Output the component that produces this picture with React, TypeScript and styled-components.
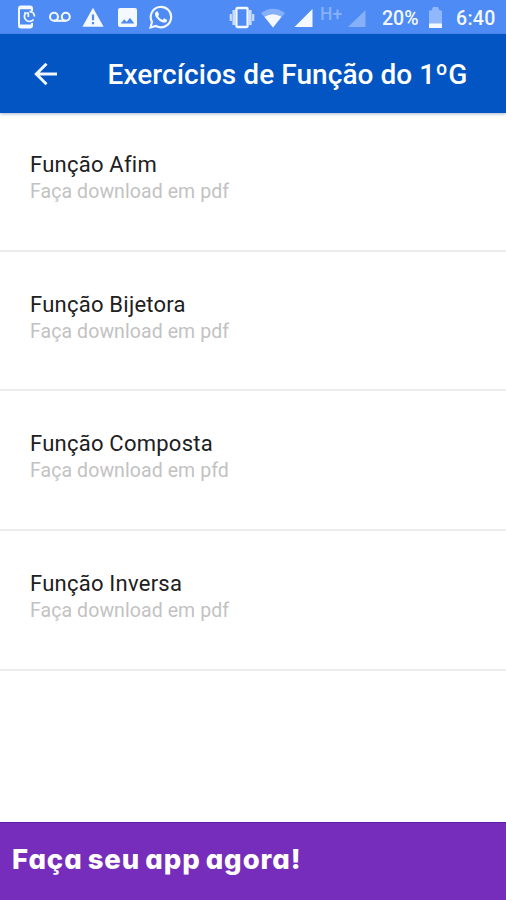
import React from "react";
import styled, { createGlobalStyle } from "styled-components";

const GlobalStyle = createGlobalStyle`
  * { box-sizing: border-box; }
  body { margin: 0; background: #fff; overflow: hidden; }
`;

const Screen = styled.div`
  display: flex;
  flex-direction: column;
  width: 506px;
  height: 900px;
  overflow: hidden;
  background: #fff;
  font-family: Roboto, "Liberation Sans", sans-serif;
`;

const StatusBar = styled.div`
  flex: none;
  display: flex;
  align-items: flex-start;
  height: 34px;
  background: #4e8bf5;
  color: #f4f8ff;
`;

const StatusIcon = styled.svg<{ $gap: number; $top: number }>`
  flex: none;
  display: block;
  margin-left: ${(p) => p.$gap}px;
  margin-top: ${(p) => p.$top}px;
`;

const StatusText = styled.span<{ $gap: number; $width: number; $spacing?: number }>`
  flex: none;
  width: ${(p) => p.$width}px;
  margin-left: ${(p) => p.$gap}px;
  margin-top: 7px;
  font-size: 19.5px;
  font-weight: 500;
  line-height: 24px;
  letter-spacing: ${(p) => p.$spacing ?? 0}px;
  white-space: nowrap;
`;

const NetworkLabel = styled.span`
  flex: none;
  width: 22px;
  margin-left: 7px;
  margin-top: 4px;
  font-size: 17.5px;
  font-weight: 500;
  line-height: 20px;
  color: #86b0fa;
  white-space: nowrap;
`;

const AppBar = styled.header`
  flex: none;
  display: flex;
  align-items: center;
  height: 79px;
  padding-left: 34px;
  background: #0255c2;
  color: #fff;
  box-shadow: 0 1px 3px rgba(40, 70, 110, 0.4);
  z-index: 1;
`;

const BackButton = styled.button`
  display: flex;
  padding: 0;
  border: 0;
  background: none;
  color: #eef6ff;
`;

const Title = styled.h1`
  margin: 2px 0 0 49.5px;
  font-size: 28px;
  font-weight: 500;
  line-height: 32px;
  letter-spacing: 0.06px;
  white-space: nowrap;
`;

const List = styled.ul`
  flex: 1;
  margin: -1px 0 0;
  padding: 0;
  list-style: none;
`;

const Item = styled.li`
  height: 139.67px;
  padding: 39px 30px 0;
  border-bottom: 2px solid #ececec;
`;

const ItemTitle = styled.div`
  font-size: 22px;
  line-height: 28px;
  letter-spacing: 0.24px;
  color: #202020;
`;

const ItemHint = styled.div`
  font-size: 19.5px;
  line-height: 26px;
  letter-spacing: 0.08px;
  color: #c2c2c2;
`;

const Banner = styled.footer`
  flex: none;
  display: flex;
  align-items: center;
  height: 78px;
  padding: 0 12px 5px;
  border-top: 1px solid #5f1fa5;
  background: #762dbb;
  color: #fff;
  font-family: Inter, "Open Sans", sans-serif;
  font-size: 27.5px;
  font-weight: 800;
  letter-spacing: 0.95px;
  word-spacing: -2px;
  font-feature-settings: "cv11" 1, "ss03" 1;
  white-space: nowrap;
`;

const items = [
  { title: "Função Afim", hint: "Faça download em pdf" },
  { title: "Função Bijetora", hint: "Faça download em pdf" },
  { title: "Função Composta", hint: "Faça download em pfd" },
  { title: "Função Inversa", hint: "Faça download em pdf" },
];

export default function App() {
  return (
    <>
      <GlobalStyle />
      <Screen>
        <StatusBar>
          <StatusIcon $gap={17} $top={5} width="20" height="24" viewBox="0 0 20 24" fill="none" stroke="currentColor">
            <path d="M15 6V3.5Q15 1.5 13 1.5H4Q2 1.5 2 3.5V20.5Q2 22.5 4 22.5H13Q15 22.5 15 20.5V18" strokeWidth="2" />
            <path d="M2 2.7H15M2 21H15" strokeWidth="3" />
            <path d="M8.5 8.3A5 5 0 1 0 16.5 14.5M12.5 6.5A5 5 0 0 1 17.5 11.5" strokeWidth="1.8" />
            <path d="M7 8H11.3V12" strokeWidth="1.7" />
          </StatusIcon>
          <StatusIcon $gap={11} $top={11} width="24" height="12" viewBox="0 0 24 12" fill="none" stroke="currentColor" strokeWidth="2.1">
            <circle cx="6" cy="5.7" r="4" />
            <circle cx="17.8" cy="5.7" r="4" />
            <path d="M6 9.8H18" />
          </StatusIcon>
          <StatusIcon $gap={10} $top={7} width="22" height="20" viewBox="0 0 22 20" fill="currentColor">
            <path fillRule="evenodd" d="M11 .7L21.6 19.7H.4ZM9.9 7.5V13.2H12.1V7.5ZM9.9 15V17.2H12.1V15Z" />
          </StatusIcon>
          <StatusIcon $gap={14} $top={8} width="19" height="19" viewBox="0 0 19 19" fill="currentColor">
            <path fillRule="evenodd" d="M2 0H17Q19 0 19 2V17Q19 19 17 19H2Q0 19 0 17V2Q0 0 2 0ZM2.7 15.5H16.3L12 9.8L8.7 14L6.3 11.3Z" />
          </StatusIcon>
          <StatusIcon $gap={12} $top={5} width="24" height="24" viewBox="0 0 24 24" fill="currentColor">
            <path d="M17.472 14.382c-.297-.149-1.758-.867-2.03-.967-.273-.099-.471-.148-.67.15-.197.297-.767.966-.94 1.164-.173.199-.347.223-.644.075-.297-.15-1.255-.463-2.39-1.475-.883-.788-1.48-1.761-1.653-2.059-.173-.297-.018-.458.13-.606.134-.133.298-.347.446-.52.149-.174.198-.298.298-.497.099-.198.05-.371-.025-.52-.075-.149-.669-1.612-.916-2.207-.242-.579-.487-.5-.669-.51-.173-.008-.371-.01-.57-.01-.198 0-.52.074-.792.372-.272.297-1.04 1.016-1.04 2.479 0 1.462 1.065 2.875 1.213 3.074.149.198 2.096 3.2 5.077 4.487.709.306 1.262.489 1.694.625.712.227 1.36.195 1.871.118.571-.085 1.758-.719 2.006-1.413.248-.694.248-1.289.173-1.413-.074-.124-.272-.198-.57-.347" />
            <path d="M1.5 22.5L3 17A10.2 10.2 0 1 1 7 21Z" fill="none" stroke="currentColor" strokeWidth="2.1" />
          </StatusIcon>
          <StatusIcon $gap={56} $top={6} width="26" height="23" viewBox="0 0 26 23" fill="none" stroke="currentColor">
            <rect x="7.4" y="2" width="11.2" height="19" rx="1" strokeWidth="2.3" />
            <path d="M4.7 4V19M21.3 4V19" strokeWidth="2.6" opacity=".75" />
            <path d="M1.8 8V15M24.2 8V15" strokeWidth="2.2" opacity=".75" />
          </StatusIcon>
          <StatusIcon $gap={5} $top={8} width="26" height="20" viewBox="0 0 26 20">
            <path d="M1 5Q13-3.5 25 5L13 19.5Z" fill="#86b0fa" />
            <path d="M4.5 8.8Q13 3.5 21.5 8.8L13 19.5Z" fill="currentColor" />
          </StatusIcon>
          <StatusIcon $gap={8} $top={9} width="19" height="18" viewBox="0 0 19 18">
            <path d="M18.5 0V18H.5Z" fill="currentColor" />
          </StatusIcon>
          <NetworkLabel>H+</NetworkLabel>
          <StatusIcon $gap={6} $top={10} width="18" height="17" viewBox="0 0 18 17">
            <path d="M17.5 0V17H0Z" fill="#86b0fa" />
          </StatusIcon>
          <StatusText $gap={16} $width={38}>20%</StatusText>
          <StatusIcon $gap={9} $top={7} width="13" height="21" viewBox="0 0 13 21">
            <path d="M0 3.5H2.5L4 0H9L10.5 3.5H13V17H0Z" fill="#91b8fc" />
            <path d="M0 16.5H13V21H0Z" fill="currentColor" />
          </StatusIcon>
          <StatusText $gap={14} $width={42} $spacing={0.3}>6:40</StatusText>
        </StatusBar>
        <AppBar>
          <BackButton aria-label="Voltar">
            <svg width="24" height="24" viewBox="0 0 24 24" fill="none" stroke="currentColor" strokeWidth="3">
              <path d="M23 12H3M12.5 1.8L2.3 12L12.5 22.2" />
            </svg>
          </BackButton>
          <Title>Exercícios de Função do 1ºG</Title>
        </AppBar>
        <List>
          {items.map((item) => (
            <Item key={item.title}>
              <ItemTitle>{item.title}</ItemTitle>
              <ItemHint>{item.hint}</ItemHint>
            </Item>
          ))}
        </List>
        <Banner>Faça seu app agora!</Banner>
      </Screen>
    </>
  );
}
